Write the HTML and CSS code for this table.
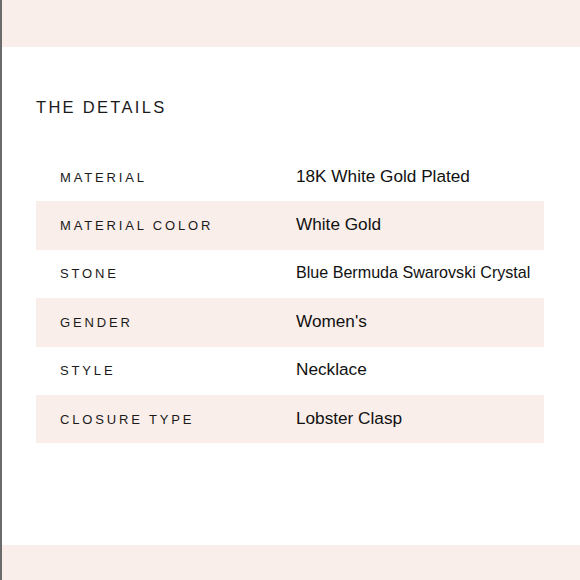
FILE: index.html
```html
<!DOCTYPE html>
<html>
<head>
<meta charset="utf-8">
<link rel="stylesheet" href="styles.css">
</head>
<body>
<div class="page">
  <div class="band band-top"></div>
  <main class="content">
    <h1 class="title">THE DETAILS</h1>
    <div class="table">
      <div class="row"><span class="label">MATERIAL</span><span class="value">18K White Gold Plated</span></div>
      <div class="row alt"><span class="label">MATERIAL COLOR</span><span class="value">White Gold</span></div>
      <div class="row"><span class="label">STONE</span><span class="value small">Blue Bermuda Swarovski Crystal</span></div>
      <div class="row alt"><span class="label">GENDER</span><span class="value">Women's</span></div>
      <div class="row"><span class="label">STYLE</span><span class="value">Necklace</span></div>
      <div class="row alt"><span class="label">CLOSURE TYPE</span><span class="value">Lobster Clasp</span></div>
    </div>
  </main>
  <div class="band band-bottom"></div>
</div>
</body>
</html>
```
FILE: styles.css
```css
html, body {
  margin: 0;
  padding: 0;
  background: #fff;
}
.page {
  width: 578px;
  height: 580px;
  border-left: 2px solid #6b6b6b;
  display: flex;
  flex-direction: column;
  font-family: "Liberation Sans", Arial, sans-serif;
  color: #1a1a1a;
}
.band {
  background: #faeeea;
  flex: none;
}
.band-top { height: 47px; }
.band-bottom { height: 35px; margin-top: auto; }
.content {
  padding: 0 36px 0 34px;
}
.title {
  margin: 51px 0 0 0;
  font-size: 16.5px;
  font-weight: normal;
  letter-spacing: 2.3px;
  line-height: 18px;
  color: #1a1a1a;
}
.table {
  margin-top: 37px;
  display: flex;
  flex-direction: column;
}
.row {
  height: 48.4px;
  display: flex;
  align-items: center;
}
.row.alt { background: #faeeea; }
.label {
  width: 236px;
  padding-left: 24px;
  font-size: 13px;
  letter-spacing: 2.85px;
  color: #1a1a1a;
}
.value {
  font-size: 17.2px;
  color: #111;
  margin-top: -2px;
}
.value.small { font-size: 16.1px; }
```
